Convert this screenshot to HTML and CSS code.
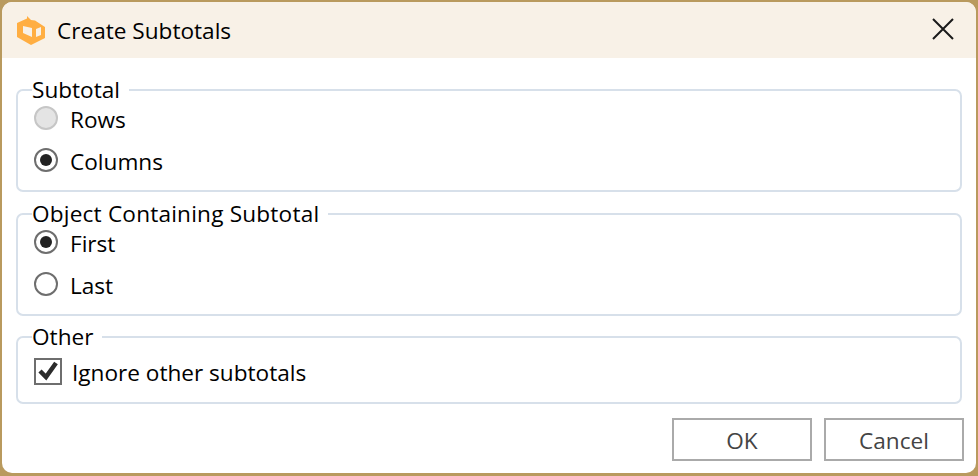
FILE: index.html
```html
<!DOCTYPE html>
<html lang="en">
<head>
    <meta charset="UTF-8">
    <title>Create Subtotals</title>
    <link rel="stylesheet" href="styles.css">
</head>
<body>
    <div class="window">
        <div class="titleBar">
            <svg class="appIcon" width="28" height="31" viewBox="0 0 28 31">
                <path fill="#ffae42" d="M10 1 L14 5 L18 5.500 L28 12 V23 L14 30 L0 22 V8 L10 3.500 Z"/>
                <path fill="#f8f1e7" d="M6 11 L15 13 V22 L6 18 Z"/>
                <path fill="#f8f1e7" d="M19 14 L24 12 V20 L19 22 Z"/>
            </svg>
            <span class="titleText">Create Subtotals</span>
            <svg class="closeIcon" width="22" height="22" viewBox="0 0 22 22">
                <path d="M1 1 L21 21 M21 1 L1 21" stroke="#1a1a1a" stroke-width="2" fill="none"/>
            </svg>
        </div>
        <div class="content">
            <fieldset class="group">
                <legend>Subtotal</legend>
                <div class="option"><span class="radio disabled"></span>Rows</div>
                <div class="option"><span class="radio checked"></span>Columns</div>
            </fieldset>
            <fieldset class="group mid">
                <legend class="wideLegend">Object Containing Subtotal</legend>
                <div class="option"><span class="radio checked"></span>First</div>
                <div class="option"><span class="radio"></span>Last</div>
            </fieldset>
            <fieldset class="group short">
                <legend>Other</legend>
                <div class="option">
                    <span class="checkbox">
                        <svg width="22" height="22" viewBox="0 0 22 22">
                            <path d="M3 11 L9 17 L19 3" stroke="#2b2b2b" stroke-width="4.500" fill="none"/>
                        </svg>
                    </span>Ignore other subtotals
                </div>
            </fieldset>
            <div class="buttons">
                <button class="btn">OK</button>
                <button class="btn">Cancel</button>
            </div>
        </div>
    </div>
</body>
</html>
```

FILE: styles.css
```css
html, body {
    margin: 0;
    height: 100%;
}
body {
    background-color: #b99a5e;
    font-family: "Open Sans", sans-serif;
    color: #000;
    overflow: hidden;
}
.window {
    margin: 2px;
    height: 471px;
    background-color: #fff;
    border-radius: 10px;
    overflow: hidden;
}
.titleBar {
    display: flex;
    align-items: center;
    height: 56px;
    padding: 0 22px 0 15px;
    background-color: #f8f1e7;
}
.appIcon {
    margin-right: 12px;
    margin-top: 1px;
}
.titleText {
    flex: 1;
    font-size: 22.600px;
}
.closeIcon {
    margin-bottom: 3px;
}
.content {
    padding: 17px 14px 0;
}
.group {
    margin: 0 0 7px;
    padding: 0 14px 9px;
    border: 2px solid #d7e0ea;
    border-radius: 7px;
}
.group.mid {
    margin-bottom: 6px;
}
.group.short {
    margin-bottom: 14px;
    padding-bottom: 10px;
}
.group legend {
    padding: 0 9px 0 0;
    margin-left: 0;
    font-size: 22.600px;
    line-height: 30px;
}
.group .wideLegend {
    letter-spacing: 0.200px;
}
.option {
    box-sizing: border-box;
    display: flex;
    align-items: center;
    height: 42px;
    padding-top: 2px;
    font-size: 22.600px;
}
.option:first-of-type {
    margin-top: -8px;
}
.short .option:first-of-type {
    margin-top: 0;
    height: 40px;
    padding-top: 0;
}
.radio {
    box-sizing: border-box;
    width: 24px;
    height: 24px;
    margin: 0 12px 2px 2px;
    border: 2px solid #6e6e6e;
    border-radius: 50%;
    display: flex;
    align-items: center;
    justify-content: center;
}
.radio.disabled {
    background-color: #e4e4e4;
    border-color: #c6c6c6;
}
.radio.checked::after {
    content: "";
    width: 12px;
    height: 12px;
    border-radius: 50%;
    background-color: #222;
}
.checkbox {
    box-sizing: border-box;
    width: 28px;
    height: 27px;
    margin: 0 10px 2px 2px;
    border: 2px solid #6e6e6e;
    display: flex;
    align-items: center;
    justify-content: center;
}
.buttons {
    display: flex;
    justify-content: flex-end;
    gap: 12px;
    margin-right: -2px;
}
.btn {
    width: 140px;
    height: 43px;
    background-color: #fff;
    border: 2px solid #aaa;
    color: #444;
    font-family: "Open Sans", sans-serif;
    font-size: 22.600px;
    padding: 2px 0 0;
}
```
